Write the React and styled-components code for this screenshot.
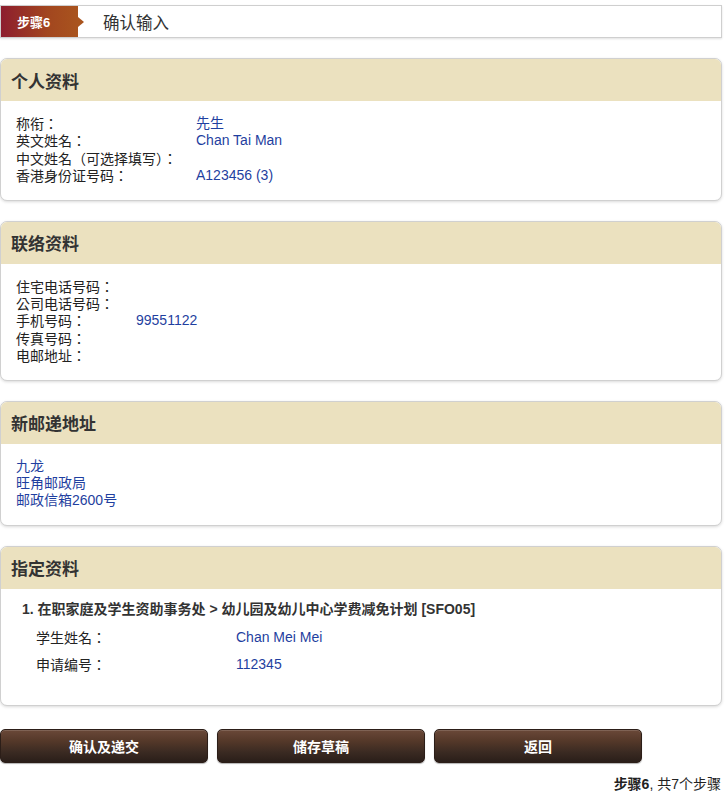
import React from "react";
import styled, { createGlobalStyle } from "styled-components";

const Global = createGlobalStyle`
  html, body { margin: 0; padding: 0; background: #fff; }
  body { font-family: "Liberation Sans", Arial, "Noto Sans CJK SC", sans-serif; color: #222; }
`;

const Page = styled.div`
  width: 722px;
  padding-top: 5px;
  display: flex;
  flex-direction: column;
`;

const StepBar = styled.div`
  height: 31px;
  border: 1px solid #cfcfcf;
  box-shadow: 0 1px 2px rgba(0,0,0,0.12);
  display: flex;
  align-items: center;
  background: #fff;
`;

const StepBadge = styled.div`
  position: relative;
  width: 77px;
  height: 100%;
  background: linear-gradient(to right, #8d1d2e, #a2461f 60%, #a9541e);
  color: #fff;
  font-weight: bold;
  font-size: 13px;
  display: flex;
  align-items: center;
  padding-left: 16px;
  box-sizing: border-box;
  &::after {
    content: "";
    position: absolute;
    right: -6px;
    top: 50%;
    margin-top: -5px;
    border-style: solid;
    border-width: 5px 0 5px 6px;
    border-color: transparent transparent transparent #a9541e;
  }
`;

const StepTitle = styled.div`
  margin-left: 25px;
  font-size: 16.5px;
  color: #333;
  font-family: "Noto Sans CJK SC", sans-serif;
`;

const Panel = styled.section`
  margin-top: 20px;
  border: 1px solid #d0d0d0;
  border-radius: 7px;
  box-shadow: 0 1px 3px rgba(0,0,0,0.15);
  overflow: hidden;
  background: #fff;
`;

const PanelHead = styled.h2`
  margin: 0;
  height: 42px;
  background: #ebe1bf;
  display: flex;
  align-items: center;
  padding-left: 10px;
  font-size: 17px;
  font-weight: bold;
  color: #333;
  font-family: "Noto Sans CJK SC", sans-serif;
`;

const PanelBody = styled.div`
  padding: ${p => p.$pad || "14px 15px 15px 15px"};
  font-size: 14px;
  line-height: 17.4px;
`;

const Row = styled.div`
  display: grid;
  grid-template-columns: ${p => p.$label}px 1fr;
  height: 17.4px;
`;

const Label = styled.span`
  color: #222;
  font-family: "Noto Sans CJK TC", sans-serif;
  font-size: 14px;
`;

const Value = styled.span`
  color: #1f3fa0;
  font-family: "Liberation Sans", Arial, "Noto Sans CJK SC", sans-serif;
`;

const Line = styled.div`
  color: #1f3fa0;
  height: 17.4px;
  font-family: "Liberation Sans", Arial, "Noto Sans CJK SC", sans-serif;
`;

const ItemTitle = styled.div`
  font-weight: bold;
  font-size: 14px;
  line-height: 18px;
  color: #333;
  padding-left: 6px;
  margin-bottom: 6px;
`;

const ItemRow = styled.div`
  display: grid;
  grid-template-columns: 200px 1fr;
  padding-left: 20px;
  height: 27px;
  line-height: 27px;
`;

const Buttons = styled.div`
  margin-top: 23px;
  display: flex;
  gap: 9px;
`;

const Btn = styled.button`
  width: 208px;
  height: 34px;
  border: 1px solid #2c1e18;
  border-radius: 5px;
  background: linear-gradient(to bottom, #6a4838 0%, #543829 35%, #3a2a22 70%, #2a1e19 100%);
  box-shadow: inset 0 1px 0 rgba(255,255,255,0.15), 0 1px 1px rgba(0,0,0,0.3);
  color: #fff;
  font-weight: bold;
  font-size: 14px;
  font-family: "Noto Sans CJK SC", sans-serif;
  cursor: pointer;
  padding: 0;
`;

const Footer = styled.div`
  margin-top: 11px;
  text-align: right;
  font-size: 14px;
  line-height: 20px;
  color: #222;
  font-family: "Liberation Sans", Arial, "Noto Sans CJK SC", sans-serif;
  padding-bottom: 1px;
  border-bottom: 3px solid #ececec;
  width: 727px;
  box-sizing: border-box;
  padding-right: 6px;
`;

const Strong = styled.b`
  font-weight: bold;
`;

const personal = [
  ["称衔：", "先生"],
  ["英文姓名：", "Chan Tai Man"],
  ["中文姓名（可选择填写）：", ""],
  ["香港身份证号码：", "A123456 (3)"],
];

const contact = [
  ["住宅电话号码：", ""],
  ["公司电话号码：", ""],
  ["手机号码：", "99551122"],
  ["传真号码：", ""],
  ["电邮地址：", ""],
];

export default function App() {
  return (
    <>
      <Global />
      <Page>
        <StepBar>
          <StepBadge>步骤6</StepBadge>
          <StepTitle>确认输入</StepTitle>
        </StepBar>

        <Panel>
          <PanelHead>个人资料</PanelHead>
          <PanelBody>
            {personal.map(([l, v]) => (
              <Row key={l} $label={180}>
                <Label>{l}</Label>
                <Value>{v}</Value>
              </Row>
            ))}
          </PanelBody>
        </Panel>

        <Panel>
          <PanelHead>联络资料</PanelHead>
          <PanelBody>
            {contact.map(([l, v]) => (
              <Row key={l} $label={120}>
                <Label>{l}</Label>
                <Value>{v}</Value>
              </Row>
            ))}
          </PanelBody>
        </Panel>

        <Panel>
          <PanelHead>新邮递地址</PanelHead>
          <PanelBody>
            <Line>九龙</Line>
            <Line>旺角邮政局</Line>
            <Line>邮政信箱2600号</Line>
          </PanelBody>
        </Panel>

        <Panel>
          <PanelHead>指定资料</PanelHead>
          <PanelBody $pad="11px 15px 27px 15px">
            <ItemTitle>1. 在职家庭及学生资助事务处 &gt; 幼儿园及幼儿中心学费减免计划 [SFO05]</ItemTitle>
            <ItemRow>
              <Label>学生姓名：</Label>
              <Value>Chan Mei Mei</Value>
            </ItemRow>
            <ItemRow>
              <Label>申请编号：</Label>
              <Value>112345</Value>
            </ItemRow>
          </PanelBody>
        </Panel>

        <Buttons>
          <Btn>确认及递交</Btn>
          <Btn>储存草稿</Btn>
          <Btn>返回</Btn>
        </Buttons>

        <Footer>
          <Strong>步骤6</Strong>, 共7个步骤
        </Footer>
      </Page>
    </>
  );
}
